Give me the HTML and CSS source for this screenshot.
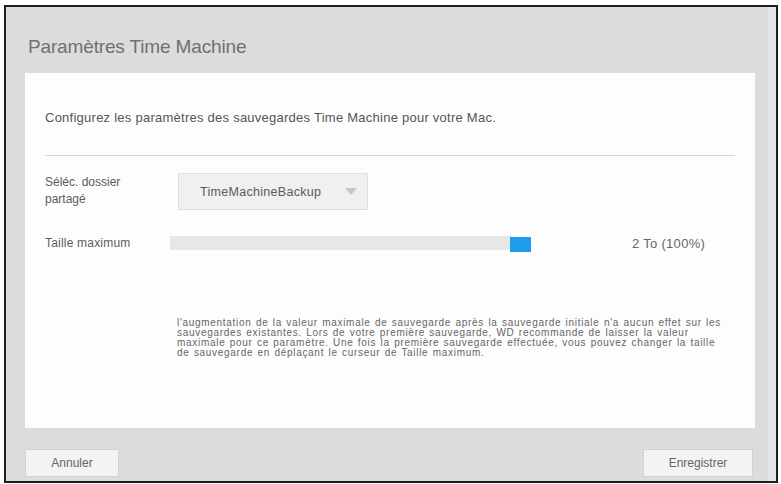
FILE: index.html
```html
<!DOCTYPE html>
<html lang="fr">
<head>
<meta charset="utf-8">
<title>Paramètres Time Machine</title>
<link rel="stylesheet" href="styles.css">
</head>
<body>
<div class="frame">
  <h1 class="title">Paramètres Time Machine</h1>
  <div class="panel">
    <p class="intro">Configurez les paramètres des sauvegardes Time Machine pour votre Mac.</p>
    <div class="rule"></div>
    <div class="row row-share">
      <div class="label label-share">Séléc. dossier<br>partagé</div>
      <div class="select">
        <span class="select-text">TimeMachineBackup</span>
        <span class="select-arrow"></span>
      </div>
    </div>
    <div class="row row-size">
      <div class="label label-size">Taille maximum</div>
      <div class="slider">
        <div class="track"></div>
        <div class="thumb"></div>
      </div>
      <div class="value">2 To (100%)</div>
    </div>
    <p class="note">l'augmentation de la valeur maximale de sauvegarde après la sauvegarde initiale n'a aucun effet sur les<br>sauvegardes existantes. Lors de votre première sauvegarde, WD recommande de laisser la valeur<br>maximale pour ce paramètre. Une fois la première sauvegarde effectuée, vous pouvez changer la taille<br>de sauvegarde en déplaçant le curseur de Taille maximum.</p>
  </div>
  <div class="footer">
    <button class="btn btn-cancel">Annuler</button>
    <button class="btn btn-save">Enregistrer</button>
  </div>
</div>
</body>
</html>
```
FILE: styles.css
```css
html, body {
  margin: 0;
  padding: 0;
  background: #ffffff;
  overflow: hidden;
}
body {
  font-family: "Liberation Sans", Arial, sans-serif;
  color: #5a5a5a;
}
.frame {
  margin: 5px 0 0 4px;
  width: 770px;
  height: 474px;
  border: 2px solid #1e1e1e;
  background: #dcdcdc;
  box-shadow: inset -8px 0 0 #e6e6e6;
  display: flex;
  flex-direction: column;
}
.title {
  margin: 28px 0 0 22px;
  font-size: 19px;
  line-height: 24px;
  font-weight: normal;
  color: #707070;
  letter-spacing: -0.15px;
}
.panel {
  margin: 14px 0 0 19px;
  width: 730px;
  height: 355px;
  background: #fdfdfd;
  padding: 0 20px;
  box-sizing: border-box;
  display: flex;
  flex-direction: column;
}
.intro {
  margin: 37px 0 0 0;
  font-size: 13px;
  line-height: 16px;
  letter-spacing: 0.25px;
  color: #555;
}
.rule {
  margin-top: 29px;
  height: 1px;
  background: #d6d6d6;
}
.row {
  display: flex;
}
.row-share {
  margin-top: 17px;
  align-items: flex-start;
}
.label {
  font-size: 12px;
  color: #5c5c5c;
}
.label-share {
  width: 133px;
  line-height: 17px;
  margin-top: 1px;
}
.select {
  width: 190px;
  height: 37px;
  box-sizing: border-box;
  background: #f0f0f0;
  border: 1px solid #e0e0e0;
  display: flex;
  align-items: center;
  padding-left: 21px;
}
.select-text {
  font-size: 12.5px;
  letter-spacing: 0.3px;
  color: #5a5a5a;
  width: 145px;
}
.select-arrow {
  width: 0;
  height: 0;
  border-left: 6px solid transparent;
  border-right: 6px solid transparent;
  border-top: 7px solid #c6c6c6;
  margin-top: -1px;
}
.row-size {
  margin-top: 26px;
  align-items: flex-start;
  height: 16px;
}
.label-size {
  width: 125px;
  line-height: 14px;
  letter-spacing: 0.2px;
}
.slider {
  width: 361px;
  height: 16px;
  display: flex;
  align-items: flex-start;
}
.track {
  flex: 1;
  height: 14px;
  background: #e7e7e7;
}
.thumb {
  width: 21px;
  height: 15px;
  margin-top: 1px;
  margin-left: -2px;
  background: #1e9bea;
}
.value {
  margin-left: 101px;
  font-size: 13px;
  line-height: 16px;
  letter-spacing: 0.3px;
  color: #666;
}
.note {
  margin: 66px 0 0 132px;
  font-size: 10px;
  line-height: 10px;
  letter-spacing: 0.7px;
  word-spacing: 0.9px;
  color: #666;
  white-space: nowrap;
}
.footer {
  display: flex;
  justify-content: space-between;
  margin: 21px 23px 0 19px;
}
.btn {
  height: 28px;
  box-sizing: border-box;
  background: #f3f3f3;
  border: 1px solid #d2d2d2;
  font-family: "Liberation Sans", Arial, sans-serif;
  font-size: 12px;
  color: #666;
  padding: 0;
}
.btn-cancel {
  width: 94px;
}
.btn-save {
  width: 110px;
}
```
